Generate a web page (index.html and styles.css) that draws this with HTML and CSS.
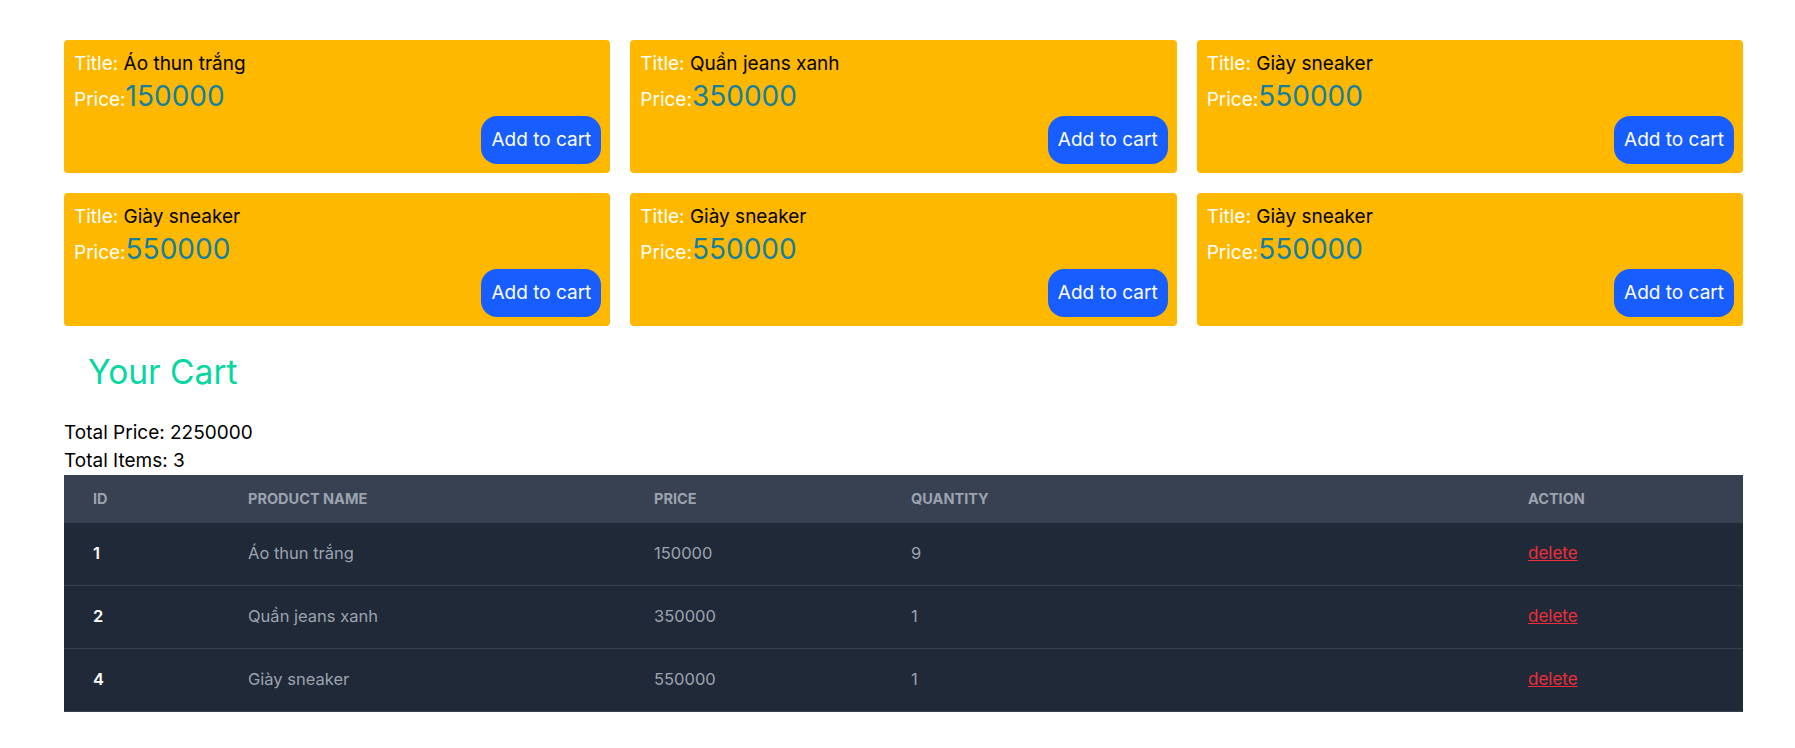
FILE: index.html
```html
<!DOCTYPE html>
<html lang="vi">
<head>
<meta charset="utf-8">
<title>Shop</title>
<link rel="stylesheet" href="styles.css">
</head>
<body>
<main class="page">
  <section class="products">
    <div class="card">
      <div class="title"><span class="label">Title:</span> Áo thun trắng</div>
      <div class="price"><span class="label">Price:</span><span class="amount">150000</span></div>
      <div class="actions"><button class="btn">Add to cart</button></div>
    </div>
    <div class="card">
      <div class="title"><span class="label">Title:</span> Quần jeans xanh</div>
      <div class="price"><span class="label">Price:</span><span class="amount">350000</span></div>
      <div class="actions"><button class="btn">Add to cart</button></div>
    </div>
    <div class="card">
      <div class="title"><span class="label">Title:</span> Giày sneaker</div>
      <div class="price"><span class="label">Price:</span><span class="amount">550000</span></div>
      <div class="actions"><button class="btn">Add to cart</button></div>
    </div>
    <div class="card">
      <div class="title"><span class="label">Title:</span> Giày sneaker</div>
      <div class="price"><span class="label">Price:</span><span class="amount">550000</span></div>
      <div class="actions"><button class="btn">Add to cart</button></div>
    </div>
    <div class="card">
      <div class="title"><span class="label">Title:</span> Giày sneaker</div>
      <div class="price"><span class="label">Price:</span><span class="amount">550000</span></div>
      <div class="actions"><button class="btn">Add to cart</button></div>
    </div>
    <div class="card">
      <div class="title"><span class="label">Title:</span> Giày sneaker</div>
      <div class="price"><span class="label">Price:</span><span class="amount">550000</span></div>
      <div class="actions"><button class="btn">Add to cart</button></div>
    </div>
  </section>

  <h2 class="cart-heading">Your Cart</h2>
  <div class="summary">
    <div>Total Price: 2250000</div>
    <div>Total Items: 3</div>
  </div>

  <table class="cart-table">
    <colgroup>
      <col class="c-id">
      <col class="c-name">
      <col class="c-price">
      <col class="c-qty">
      <col class="c-action">
    </colgroup>
    <thead>
      <tr>
        <th>ID</th>
        <th>Product name</th>
        <th>Price</th>
        <th>Quantity</th>
        <th>Action</th>
      </tr>
    </thead>
    <tbody>
      <tr>
        <td class="id">1</td>
        <td>Áo thun trắng</td>
        <td>150000</td>
        <td>9</td>
        <td><a class="delete" href="#">delete</a></td>
      </tr>
      <tr>
        <td class="id">2</td>
        <td>Quần jeans xanh</td>
        <td>350000</td>
        <td>1</td>
        <td><a class="delete" href="#">delete</a></td>
      </tr>
      <tr>
        <td class="id">4</td>
        <td>Giày sneaker</td>
        <td>550000</td>
        <td>1</td>
        <td><a class="delete" href="#">delete</a></td>
      </tr>
    </tbody>
  </table>
</main>
</body>
</html>
```

FILE: styles.css
```css
* {
  box-sizing: border-box;
}

html, body {
  margin: 0;
  padding: 0;
  background: #ffffff;
}

body {
  font-family: Inter, "Noto Sans", sans-serif;
  color: #000000;
}

.page {
  padding: 40px 52px 0 64px;
}

.products {
  display: grid;
  grid-template-columns: repeat(3, 1fr);
  gap: 20px;
}

.card {
  background: #ffb800;
  border-radius: 4px;
  padding: 10px 9px 9px 10px;
  display: flex;
  flex-direction: column;
}

.title {
  font-size: 19px;
  line-height: 28px;
  color: #000000;
}

.label {
  color: #ffffff;
}

.price {
  font-size: 19px;
  line-height: 36px;
  height: 36px;
}

.amount {
  font-size: 28px;
  color: #157fa0;
}

.actions {
  display: flex;
  justify-content: flex-end;
  margin-top: 2px;
}

.btn {
  font-family: inherit;
  font-size: 19px;
  line-height: 28px;
  color: #ffffff;
  background: #175dff;
  border: none;
  border-radius: 16px;
  padding: 10px 10px;
  cursor: pointer;
}

.cart-heading {
  margin: 26px 0 27px;
  padding-left: 24px;
  font-size: 33.5px;
  line-height: 40px;
  font-weight: 400;
  color: #06d6a0;
}

.summary {
  font-size: 19px;
  line-height: 28px;
}

.cart-table {
  width: 100%;
  border-collapse: collapse;
  table-layout: fixed;
  text-align: left;
  background: #1f2937;
}

.c-id { width: 155px; }
.c-name { width: 406px; }
.c-price { width: 257px; }
.c-qty { width: 617px; }
.c-action { width: 244px; }

.cart-table thead {
  background: #374151;
}

.cart-table th {
  font-size: 14.5px;
  line-height: 16px;
  font-weight: 700;
  text-transform: uppercase;
  color: #9ca3af;
  padding: 16px 24px 16px 29px;
}

.cart-table td {
  font-size: 16.5px;
  line-height: 24px;
  color: #9ca3af;
  padding: 18px 24px 20px 29px;
}

.cart-table tbody tr {
  border-bottom: 1px solid #374151;
}

.cart-table td.id {
  color: #ffffff;
  font-weight: 600;
}

.delete {
  font-size: 17px;
  color: #f02d3a;
  text-decoration: underline;
}
```
